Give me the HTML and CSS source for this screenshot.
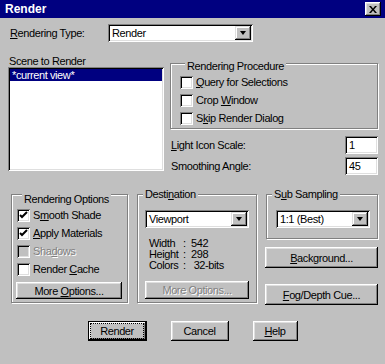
FILE: index.html
```html
<!DOCTYPE html>
<html lang="en">

<head>
    <meta charset="UTF-8">
    <meta name="viewport" content="width=device-width, initial-scale=1.0">
    <title>Render</title>
    <link rel="stylesheet" href="styles.css">
</head>

<body>

    <div class="dialog">
        <div class="titlebar">
            <span class="title">Render</span>
            <span class="close">
                <svg width="8" height="7" viewBox="0 0 8 7">
                    <path d="M0 0h2l2 2.5L6 0h2L5 3.5 8 7H6L4 4.5 2 7H0l3-3.5z" fill="#000" />
                </svg>
            </span>
        </div>

        <div class="type-row">
            <span class="type-label"><u>R</u>endering Type:</span>
            <div class="combo combo-type">
                <span class="combo-text">Render</span>
                <span class="combo-btn"><span class="arrow"></span></span>
            </div>
        </div>

        <div class="top">
            <div class="scene">
                <div class="scene-label">Scene to Render</div>
                <div class="listbox">
                    <div class="list-item selected">*current view*</div>
                </div>
            </div>

            <div class="top-right">
                <div class="group group-procedure">
                    <div class="group-label">Rendering Procedure</div>
                    <div class="check-row"><span class="check"></span><span><u>Q</u>uery for Selections</span></div>
                    <div class="check-row"><span class="check"></span><span>Crop <u>W</u>indow</span></div>
                    <div class="check-row"><span class="check"></span><span>S<u>k</u>ip Render Dialog</span></div>
                </div>

                <div class="field-row field-first">
                    <span><u>L</u>ight Icon Scale:</span>
                    <span class="textbox">1</span>
                </div>
                <div class="field-row">
                    <span>Smoothing Angle:</span>
                    <span class="textbox">45</span>
                </div>
            </div>
        </div>

        <div class="bottom">
            <div class="group group-options">
                <div class="group-label">Rendering Options</div>
                <div class="check-row">
                    <span class="check"><svg width="9" height="9" viewBox="0 0 9 9"><path d="M1 4l2 2 5-5" stroke="#000" stroke-width="2" fill="none" /></svg></span>
                    <span>S<u>m</u>ooth Shade</span>
                </div>
                <div class="check-row">
                    <span class="check"><svg width="9" height="9" viewBox="0 0 9 9"><path d="M1 4l2 2 5-5" stroke="#000" stroke-width="2" fill="none" /></svg></span>
                    <span><u>A</u>pply Materials</span>
                </div>
                <div class="check-row disabled">
                    <span class="check"></span>
                    <span>Sha<u>d</u>ows</span>
                </div>
                <div class="check-row">
                    <span class="check"></span>
                    <span>Render <u>C</u>ache</span>
                </div>
                <div class="btn btn-more"><span>More <u>O</u>ptions...</span></div>
            </div>

            <div class="group group-dest">
                <div class="group-label">Desti<u>n</u>ation</div>
                <div class="combo combo-dest">
                    <span class="combo-text">Viewport</span>
                    <span class="combo-btn"><span class="arrow"></span></span>
                </div>
                <div class="info">
                    <span>Width</span><span>:</span><span>542</span>
                    <span>Height</span><span>:</span><span>298</span>
                    <span>Colors</span><span>:</span><span>&nbsp;32-bits</span>
                </div>
                <div class="btn btn-more disabled"><span>More Options...</span></div>
            </div>

            <div class="bottom-right">
                <div class="group group-sub">
                    <div class="group-label">S<u>u</u>b Sampling</div>
                    <div class="combo combo-sub">
                        <span class="combo-text">1:1 (Best)</span>
                        <span class="combo-btn"><span class="arrow"></span></span>
                    </div>
                </div>
                <div class="btn btn-side btn-background"><span><u>B</u>ackground...</span></div>
                <div class="btn btn-side btn-fog"><span><u>F</u>og/Depth Cue...</span></div>
            </div>
        </div>

        <div class="actions">
            <div class="btn btn-action btn-default"><span class="focus">Render</span></div>
            <div class="btn btn-action btn-cancel">Cancel</div>
            <div class="btn btn-action btn-help"><span><u>H</u>elp</span></div>
        </div>
    </div>

</body>

</html>
```

FILE: styles.css
```css
body {
    margin: 0;
    background-color: #c0c0c0;
    font-family: "Liberation Sans", Arial, sans-serif;
    font-size: 11px;
    letter-spacing: -0.4px;
    color: #000;
}

.dialog {
    width: 385px;
    height: 364px;
}

/* Title bar */
.titlebar {
    height: 18px;
    background: #000080;
    display: flex;
    align-items: center;
    justify-content: space-between;
    padding: 0 4px 0 5px;
}

.title {
    color: #fff;
    font-weight: bold;
    font-size: 12px;
    letter-spacing: 0;
}

.close {
    width: 16px;
    height: 14px;
    background: #c0c0c0;
    display: flex;
    align-items: center;
    justify-content: center;
    box-shadow: inset -1px -1px #000, inset 1px 1px #fff, inset -2px -2px #808080, inset 2px 2px #dfdfdf;
}

/* Rendering type */
.type-row {
    display: flex;
    align-items: center;
    margin-top: 6px;
    padding-left: 10px;
}

.type-label {
    width: 98px;
}

/* Combo boxes */
.combo {
    height: 18px;
    background: #fff;
    display: flex;
    align-items: center;
    justify-content: space-between;
    box-sizing: border-box;
    box-shadow: inset 1px 1px #808080, inset -1px -1px #fff, inset 2px 2px #000, inset -2px -2px #dfdfdf;
}

.combo-text {
    padding-left: 4px;
}

.combo-btn {
    width: 16px;
    height: 14px;
    margin-right: 2px;
    background: #c0c0c0;
    display: flex;
    align-items: center;
    justify-content: center;
    box-shadow: inset -1px -1px #000, inset 1px 1px #dfdfdf, inset -2px -2px #808080, inset 2px 2px #fff;
}

.arrow {
    width: 0;
    height: 0;
    border-left: 3.5px solid transparent;
    border-right: 3.5px solid transparent;
    border-top: 4px solid #000;
}

.combo-type {
    width: 145px;
}

.combo-dest {
    width: 104px;
    margin: 9px 0 0 7px;
}

.combo-sub {
    width: 94px;
    margin: 9px 0 0 9px;
}

/* Top section */
.top {
    display: grid;
    grid-template-columns: 156px 208px;
    column-gap: 6px;
    margin-top: 13px;
    padding-left: 8px;
}

.scene-label {
    line-height: 12px;
    padding-left: 1px;
}

.listbox {
    height: 104px;
    background: #fff;
    padding: 2px;
    box-sizing: border-box;
    box-shadow: inset 1px 1px #808080, inset -1px -1px #fff, inset 2px 2px #000, inset -2px -2px #dfdfdf;
}

.list-item {
    line-height: 12px;
    padding-left: 2px;
}

.selected {
    background: #000080;
    color: #fff;
}

/* Group boxes */
.group {
    border: 1px solid #808080;
    box-shadow: 1px 1px 0 #fff, inset 1px 1px 0 #fff;
}

.group-label {
    width: fit-content;
    margin: -7px 0 0 5px;
    padding: 0 2px;
    line-height: 13px;
    background: #c0c0c0;
}

.group-procedure {
    margin-top: 8px;
    padding: 3px 0 1px 9px;
}

.check-row {
    display: flex;
    align-items: center;
    height: 18px;
}

.check {
    width: 13px;
    height: 13px;
    margin-right: 3px;
    background: #fff;
    display: flex;
    align-items: center;
    justify-content: center;
    box-sizing: border-box;
    box-shadow: inset 1px 1px #808080, inset -1px -1px #fff, inset 2px 2px #000, inset -2px -2px #dfdfdf;
}

.disabled {
    color: #808080;
    text-shadow: 1px 1px 0 #fff;
}

.disabled .check {
    background: #c0c0c0;
}

/* Fields */
.field-row {
    display: flex;
    align-items: center;
    justify-content: space-between;
    margin-top: 3px;
    padding-left: 1px;
}

.field-first {
    margin-top: 7px;
}

.textbox {
    width: 33px;
    height: 18px;
    line-height: 18px;
    padding-left: 4px;
    box-sizing: border-box;
    background: #fff;
    box-shadow: inset 1px 1px #808080, inset -1px -1px #fff, inset 2px 2px #000, inset -2px -2px #dfdfdf;
}

/* Bottom section */
.bottom {
    display: grid;
    grid-template-columns: 117px 120px 112px;
    column-gap: 9px;
    align-items: start;
    margin-top: 19px;
    padding-left: 11px;
}

.group-options {
    padding: 5px 0 3px 5px;
}

.group-dest {
    padding-bottom: 3px;
}

.group-sub {
    padding-bottom: 10px;
}

.info {
    display: grid;
    grid-template-columns: 34px 8px auto;
    line-height: 11px;
    margin: 10px 0 0 11px;
}

/* Buttons */
.btn {
    height: 18px;
    display: flex;
    align-items: center;
    justify-content: center;
    box-sizing: border-box;
    background: #c0c0c0;
    box-shadow: inset -1px -1px #000, inset 1px 1px #fff, inset -2px -2px #808080, inset 2px 2px #dfdfdf;
}

.btn-more {
    margin: 4px 5px 0 0;
}

.group-options .btn-more {
    margin: 4px 5px 0 -1px;
    height: 17px;
}

.group-dest .btn-more {
    margin: 10px 7px 0 7px;
}

.btn-side {
    height: 21px;
    margin-left: -1px;
}

.btn-background {
    margin-top: 8px;
}

.btn-fog {
    margin-top: 16px;
}

.actions {
    display: flex;
    justify-content: center;
    gap: 24px;
    margin-top: 16px;
}

.btn-action {
    height: 20px;
}

.btn-default {
    width: 59px;
    border: 1px solid #000;
}

.focus {
    padding: 1px 9px;
    outline: 1px dotted #000;
}

.btn-cancel {
    width: 58px;
}

.btn-help {
    width: 45px;
}
```
